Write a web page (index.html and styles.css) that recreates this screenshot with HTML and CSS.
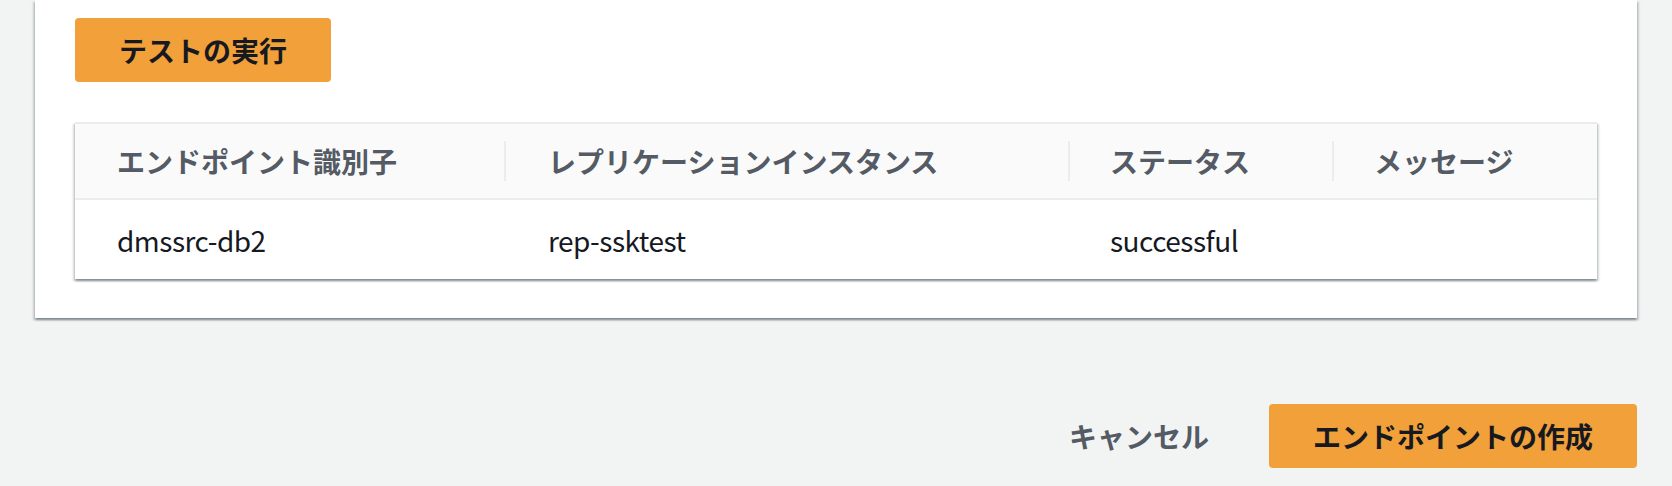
FILE: index.html
```html
<!DOCTYPE html>
<html lang="ja">
<head>
<meta charset="utf-8">
<title>エンドポイントの作成</title>
<link rel="stylesheet" href="styles.css">
</head>
<body>
<div class="page">
  <section class="panel">
    <button class="btn btn-primary" type="button">テストの実行</button>
    <div class="table-wrap">
      <table class="results">
        <colgroup>
          <col class="c1"><col class="c2"><col class="c3"><col class="c4">
        </colgroup>
        <thead>
          <tr>
            <th>エンドポイント識別子</th>
            <th class="sep">レプリケーションインスタンス</th>
            <th class="sep narrow">ステータス</th>
            <th class="sep narrow">メッセージ</th>
          </tr>
        </thead>
        <tbody>
          <tr>
            <td>dmssrc-db2</td>
            <td class="wide">rep-ssktest</td>
            <td>successful</td>
            <td></td>
          </tr>
        </tbody>
      </table>
    </div>
  </section>
  <div class="actions">
    <button class="btn btn-link" type="button">キャンセル</button>
    <button class="btn btn-primary" type="button">エンドポイントの作成</button>
  </div>
</div>
</body>
</html>
```

FILE: styles.css
```css
html, body {
  margin: 0;
  padding: 0;
}
body {
  background: #f2f3f3;
  font-family: "Noto Sans CJK JP", "Noto Sans", sans-serif;
  color: #16191f;
}
.page {
  padding: 0 35px;
}
.panel {
  background: #ffffff;
  padding: 18px 40px 39px;
  box-shadow: 0 2px 2px rgba(0, 28, 36, 0.3), 2px 2px 2px rgba(0, 28, 36, 0.15), -2px 2px 2px rgba(0, 28, 36, 0.15);
}
.btn {
  display: inline-block;
  height: 64px;
  padding: 0 42px;
  border: 2px solid transparent;
  border-radius: 4px;
  font-family: inherit;
  font-size: 28px;
  font-weight: 700;
  line-height: 60px;
  cursor: pointer;
  box-sizing: border-box;
  letter-spacing: 0;
}
.btn-primary {
  background: #f1a03a;
  border-color: #f1a03a;
  color: #16191f;
}
.btn-link {
  background: transparent;
  color: #545b64;
}
.table-wrap {
  margin-top: 40px;
  border-top: 2px solid #eaeded;
  box-shadow: 0 2px 2px rgba(0, 28, 36, 0.3), 2px 2px 2px rgba(0, 28, 36, 0.15), -2px 2px 2px rgba(0, 28, 36, 0.15);
  background: #ffffff;
}
.results {
  width: 100%;
  border-collapse: collapse;
  table-layout: fixed;
}
.c1 { width: 429px; }
.c2 { width: 564px; }
.c3 { width: 264px; }
.c4 { width: auto; }
.results th {
  height: 74px;
  padding: 0 42px;
  background: #fafafa;
  border-bottom: 2px solid #eaeded;
  text-align: left;
  font-size: 28px;
  font-weight: 700;
  color: #545b64;
  white-space: nowrap;
  box-sizing: content-box;
}
.results th.sep {
  background: linear-gradient(#eaeded, #eaeded) no-repeat 0 50% / 2px 40px, #fafafa;
  padding-left: 44px;
}
.results th.narrow {
  padding-left: 42px;
}
.results td {
  height: 80px;
  padding: 0 42px;
  font-size: 28px;
  font-weight: 400;
  letter-spacing: -0.5px;
  color: #16191f;
  box-sizing: border-box;
}
.results td + td {
  padding-left: 42px;
}
.results td.wide {
  padding-left: 44px;
}
.actions {
  display: flex;
  justify-content: flex-end;
  gap: 16px;
  margin-top: 86px;
}
```
